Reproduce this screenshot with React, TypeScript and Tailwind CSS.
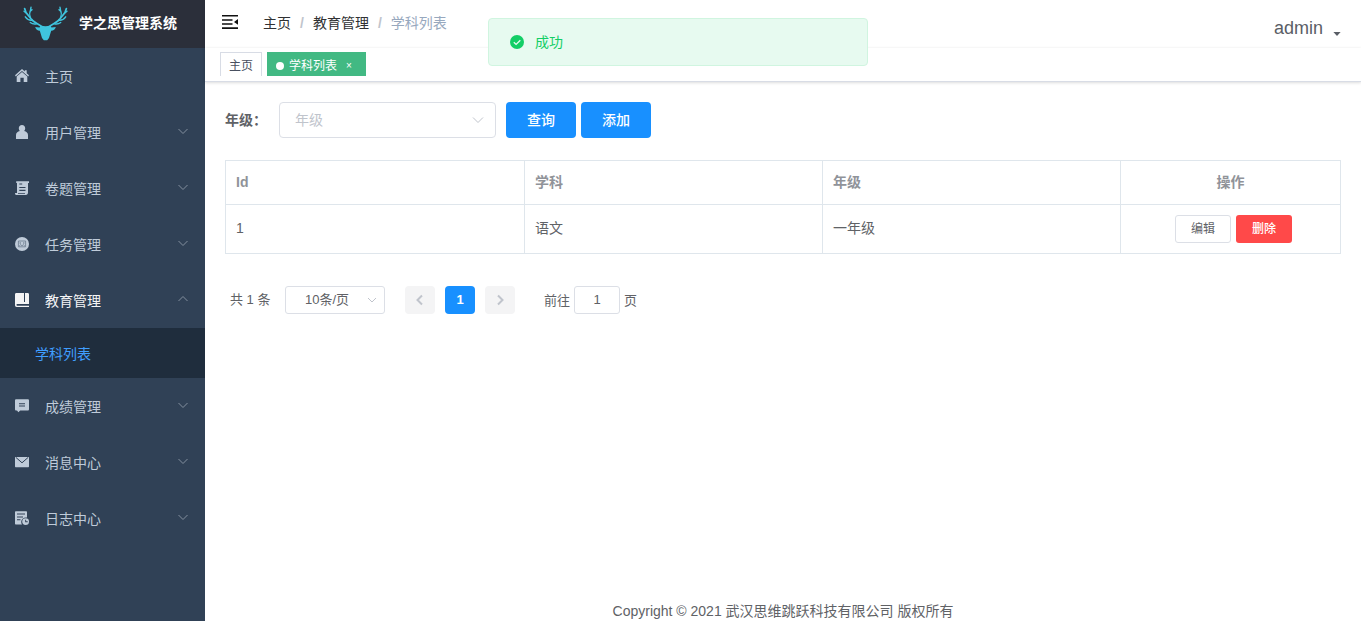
import type { ReactNode } from "react";

type IconName = "home" | "user" | "paper" | "task" | "book" | "comment" | "mail" | "log";

const menuItems: { label: string; icon: IconName; active?: boolean; children?: string[] }[] = [
  { label: "主页", icon: "home" },
  { label: "用户管理", icon: "user", children: [] },
  { label: "卷题管理", icon: "paper", children: [] },
  { label: "任务管理", icon: "task", children: [] },
  { label: "教育管理", icon: "book", active: true, children: ["学科列表"] },
  { label: "成绩管理", icon: "comment", children: [] },
  { label: "消息中心", icon: "mail", children: [] },
  { label: "日志中心", icon: "log", children: [] }
];

const rows = [{ id: 1, name: "语文", level: "一年级" }];

const iconShapes: Record<IconName, ReactNode> = {
  home: (
    <>
      <path d="M0 6.3 7 .1l2.8 2.4V1.2h1.9v3L14 6.3l-.8 1.1L7 2.100.8 7.400z" />
      <path d="M1.700 7.600 7 3.100l5.300 4.500V13H8.700V8.800H5.400V13H1.700z" />
    </>
  ),
  user: (
    <path d="M7 0c2 0 3.200 1.400 3.200 3.200 0 1.100-.4 2.100-1.100 2.700C11.500 6.500 13 7.800 13 10v4H1v-4c0-2.200 1.500-3.500 3.900-4.100C4.200 5.300 3.800 4.300 3.800 3.200 3.800 1.400 5 0 7 0z" />
  ),
  paper: (
    <path
      fillRule="evenodd"
      d="M1.200.2H14v1.900h-1v9.400c0 1.600-.8 2.500-2.200 2.500H1.200C.4 14 0 13.200 0 12h2V2.100h-.8zM4.300 2.600v1h2.900v-1zM4.300 6v1.100h6.200V6zm0 2.800v1.100h6.200V8.800zM3 12v.8h7V12z"
    />
  ),
  task: (
    <>
      <circle cx="7" cy="7" r="7" />
      <g fill="none" stroke="#68788c" strokeWidth=".8">
        <path d="M3.400 4h7.200v5.800H3.400zM5.200 5v2M8.800 5v2M4.200 9l1.500-1.300L7 8.800l1.300-1.100L9.800 9" />
      </g>
    </>
  ),
  book: (
    <path fillRule="evenodd" d="M1.500 0H9v9h1V0h2.500C13.500 0 14 .5 14 1.500V11H2.200c-1 0-1 1.700 0 1.700H14V14H1.800C.6 14 0 13.300 0 12V1.500C0 .5.5 0 1.500 0z" />
  ),
  comment: (
    <path
      fillRule="evenodd"
      d="M1.300.2h11.400c.8 0 1.300.5 1.300 1.300v8.700c0 .8-.5 1.300-1.300 1.300H5.200L3.400 13.200 2 11.500h-.7c-.8 0-1.300-.5-1.300-1.300V1.500C0 .7.500.2 1.300.2zM4 4.200v1h6v-1zm0 2.400v1h6v-1z"
    />
  ),
  mail: (
    <>
      <path d="M1 2h12c.6 0 1 .4 1 1v8.200c0 .6-.4 1-1 1H1c-.6 0-1-.4-1-1V3c0-.6.400-1 1-1z" />
      <path d="m1 2.500 6 5.300 6-5.300" fill="none" stroke="#304156" strokeWidth="1" />
    </>
  ),
  log: (
    <>
      <path
        fillRule="evenodd"
        d="M1 .2h10c.6 0 1 .4 1 1v5.300c-3.200-.5-5.600 1.400-5.800 4.200 0 1.100.2 2 .8 2.900H1c-.6 0-1-.4-1-1V1.200c0-.6.400-1 1-1zM2 2.600v1h8v-1zm0 2.800v1h6v-1zm0 2.800v1h3.500v-1z"
      />
      <path fillRule="evenodd" d="M10.600 7.200a3.400 3.400 0 1 1 0 6.800 3.400 3.400 0 0 1 0-6.800zm-.4 1.500v2.500h2.500v-.9h-1.600V8.700z" />
    </>
  )
};

function MenuIcon({ name }: { name: IconName }) {
  return (
    <svg viewBox="0 0 14 14" fill="currentColor" className="h-3.5 w-3.5 shrink-0">
      {iconShapes[name]}
    </svg>
  );
}

function Chevron({ className, d = "M1 3.5 6 8.5l5-5" }: { className: string; d?: string }) {
  return (
    <svg viewBox="0 0 12 12" fill="none" stroke="currentColor" className={className}>
      <path d={d} />
    </svg>
  );
}

function Antler() {
  return (
    <>
      <path d="M19.500 21.500C16.500 17.500 10.500 17 7.800 12.500 6.500 10 2.500 8.500 1.600 2.500" strokeWidth="1.700" />
      <path d="M7.200 11.500C6.200 8 6.800 5.500 7.500 4L8 1.300M7 5.500 9 3.800M2.500 6.500 1 5.300" strokeWidth="1.400" />
      <path d="M9 14.200C6 14.500 3.500 12.500 2.300 10.800M13.500 17.800c-2.700.6-4.700-.1-6.200-1.300" strokeWidth="1.400" />
    </>
  );
}

function Logo() {
  return (
    <svg viewBox="0 0 45 36" className="h-9 w-[45px] shrink-0" fill="none" stroke="#3fc4de" strokeLinecap="round">
      <Antler />
      <g transform="matrix(-1 0 0 1 45 0)">
        <Antler />
      </g>
      <path
        d="M18 19.500c3 .9 6 .9 9 0l1.500 1.900 4.300-.4c-.5 2.200-2.300 3.600-4.600 3.800L26 32l-1.800 2.200h-3.400L19 32l-2.200-7.200c-2.300-.2-4.100-1.600-4.600-3.800l4.300.4z"
        fill="#3fc4de"
        stroke="none"
      />
    </svg>
  );
}

function Sidebar() {
  return (
    <aside className="w-[205px] shrink-0 bg-[#304156] text-[#bfcbd9]">
      <div className="flex h-12 items-center bg-[#2b2f3a] pl-[23px]">
        <Logo />
        <h1 className="mb-0.5 ml-[11px] text-sm font-bold text-white">学之思管理系统</h1>
      </div>
      <nav>
        {menuItems.map((item) => (
          <div key={item.label}>
            <div className={item.active ? "flex h-14 items-center pr-4 pl-[15px] text-[#f4f4f5]" : "flex h-14 items-center pr-4 pl-[15px]"}>
              <MenuIcon name={item.icon} />
              <span className="mt-px ml-4 flex-1 text-sm">{item.label}</span>
              {item.children && (
                <Chevron
                  className="mb-0.5 h-3 w-3 text-[#84909f]"
                  d={item.active ? "M1.500 8 6 3.500 10.500 8" : "M1.500 4 6 8.500 10.500 4"}
                />
              )}
            </div>
            {item.children?.map((child) => (
              <div key={child} className="flex h-[50px] items-center bg-[#1f2d3d] pt-0.5 pl-[35px] text-sm text-[#409eff]">
                {child}
              </div>
            ))}
          </div>
        ))}
      </nav>
    </aside>
  );
}

function Navbar() {
  return (
    <header className="flex h-12 shrink-0 items-center bg-white pr-5 pl-[17px] shadow-[0_1px_4px_rgba(0,21,41,0.08)]">
      <svg viewBox="0 0 16 14" className="mb-1 h-3.5 w-4" fill="#111">
        <path d="M0 0h16v1.600H0zM0 4.200h10.500v1.500H0zM0 8.200h10.500v1.500H0zM0 12.300h16V14H0zM16 4v5.800L12 6.900z" />
      </svg>
      <div className="mb-0.5 ml-[25px] flex text-sm text-[#303133]">
        <span>主页</span>
        <span className="mx-[9px] font-bold text-[#c0c4cc]">/</span>
        <span>教育管理</span>
        <span className="mx-[9px] font-bold text-[#c0c4cc]">/</span>
        <span className="text-[#97a8be]">学科列表</span>
      </div>
      <div className="mt-2 ml-auto flex items-center text-lg text-[#5a5e66]">
        <span>admin</span>
        <svg viewBox="0 0 8 4" className="mt-3 ml-2.5 h-1 w-2" fill="currentColor">
          <path d="M.4 0h7.200L4 4z" />
        </svg>
      </div>
    </header>
  );
}

function TagsView() {
  return (
    <div className="h-[34px] shrink-0 border-b border-[#d8dce5] bg-white pl-[15px] shadow-[0_1px_3px_0_rgba(0,0,0,0.12),0_0_3px_0_rgba(0,0,0,0.04)]">
      <div className="flex h-7 gap-[5px] overflow-hidden pt-1 text-xs">
        <span className="flex h-[26px] items-center border border-[#d8dce5] px-2 pt-px text-[#495060]">主页</span>
        <span className="flex h-[26px] w-[99px] items-center border border-[#42b983] bg-[#42b983] px-2 pt-px text-white">
          <i className="mr-[5px] h-2 w-2 rounded-full bg-white" />
          学科列表
          <span className="ml-[9px] text-[10px]">×</span>
        </span>
      </div>
    </div>
  );
}

function SearchForm() {
  return (
    <div className="flex h-9 items-center text-sm">
      <label className="w-[54px] font-bold text-[#606266]">年级：</label>
      <div className="flex h-9 w-[217px] items-center justify-between rounded border border-[#dcdfe6] pr-[11px] pl-[15px] text-[#c0c4cc]">
        年级
        <Chevron className="h-3 w-3" d="M1 3.500 6 8.500l5-5" />
      </div>
      <button type="button" className="ml-2.5 h-9 w-[70px] rounded bg-[#1890ff] font-medium text-white">查询</button>
      <button type="button" className="ml-[5px] h-9 w-[70px] rounded bg-[#1890ff] font-medium text-white">添加</button>
    </div>
  );
}

function SubjectTable() {
  return (
    <table className="mt-[22px] w-full table-fixed border-collapse text-left text-sm text-[#606266]">
      <colgroup>
        <col className="w-[299px]" />
        <col className="w-[298px]" />
        <col className="w-[298px]" />
        <col className="w-[220px]" />
      </colgroup>
      <thead className="text-[#909399]">
        <tr className="h-11">
          <th className="border border-[#dfe6ec] px-2.5 pb-0.5 font-bold">Id</th>
          <th className="border border-[#dfe6ec] px-2.5 pb-0.5 font-bold">学科</th>
          <th className="border border-[#dfe6ec] px-2.5 pb-0.5 font-bold">年级</th>
          <th className="border border-[#dfe6ec] px-2.5 pb-0.5 text-center font-bold">操作</th>
        </tr>
      </thead>
      <tbody>
        {rows.map((row) => (
          <tr key={row.id} className="h-[49px]">
            <td className="border border-[#dfe6ec] px-2.5 pb-0.5">{row.id}</td>
            <td className="border border-[#dfe6ec] px-2.5 pb-0.5">{row.name}</td>
            <td className="border border-[#dfe6ec] px-2.5 pb-0.5">{row.level}</td>
            <td className="border border-[#dfe6ec] px-2.5">
              <div className="flex justify-center gap-[5px] pl-1.5 text-xs">
                <button type="button" className="h-7 w-14 rounded-[3px] border border-[#dcdfe6] bg-white">编辑</button>
                <button type="button" className="h-7 w-14 rounded-[3px] bg-[#ff4949] font-medium text-white">删除</button>
              </div>
            </td>
          </tr>
        ))}
      </tbody>
    </table>
  );
}

function Pagination() {
  return (
    <div className="mt-8 flex h-7 items-center pl-[5px] text-[13px] text-[#606266]">
      <span className="w-[55px]">共 1 条</span>
      <div className="flex h-7 w-[100px] items-center rounded-[3px] border border-[#dcdfe6] pr-1.5 pl-[19px]">
        <span className="flex-1">10条/页</span>
        <Chevron className="h-3 w-3 text-[#c0c4cc]" d="M2 4 6 8l4-4" />
      </div>
      <button type="button" className="ml-5 flex h-7 w-[30px] items-center justify-center rounded-sm bg-[#f4f4f5] text-[#c0c4cc]">
        <Chevron className="h-3 w-3 stroke-2" d="M8 1.500 3.500 6 8 10.500" />
      </button>
      <button type="button" className="ml-2.5 h-7 w-[30px] rounded-sm bg-[#1890ff] font-bold text-white">1</button>
      <button type="button" className="ml-2.5 flex h-7 w-[30px] items-center justify-center rounded-sm bg-[#f4f4f5] text-[#c0c4cc]">
        <Chevron className="h-3 w-3 stroke-2" d="M4 1.500 8.500 6 4 10.500" />
      </button>
      <span className="ml-[29px] w-[30px] pt-px">前往</span>
      <span className="flex h-7 w-[46px] items-center justify-center rounded-[3px] border border-[#dcdfe6]">1</span>
      <span className="ml-1 pt-px">页</span>
    </div>
  );
}

export default function App() {
  return (
    <div className="relative flex h-[621px] overflow-hidden bg-white font-['Liberation_Sans','Noto_Sans_CJK_SC',sans-serif]">
      <Sidebar />
      <div className="flex min-w-0 flex-1 flex-col">
        <Navbar />
        <TagsView />
        <main className="flex-1 p-5">
          <SearchForm />
          <SubjectTable />
          <Pagination />
        </main>
        <footer className="h-5 text-center text-sm leading-5 text-[#606266]">Copyright © 2021 武汉思维跳跃科技有限公司 版权所有</footer>
      </div>

      {/* success message */}
      <div className="absolute top-[18px] left-[488px] flex h-12 w-[380px] items-center rounded border border-[#d0f5e0] bg-[#e7faf0] pl-[21px] text-sm text-[#13ce66]">
        <svg viewBox="0 0 14 14" className="mr-[11px] h-3.5 w-3.5">
          <circle cx="7" cy="7" r="7" fill="#13ce66" />
          <path d="m3.800 7.200 2.300 2.200 4.200-4.200" fill="none" stroke="#e7faf0" strokeWidth="1.300" />
        </svg>
        成功
      </div>
    </div>
  );
}
